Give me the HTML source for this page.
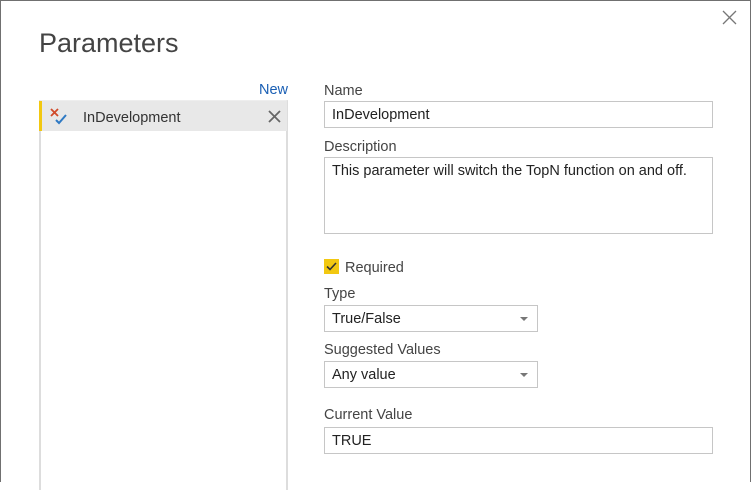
<!DOCTYPE html>
<html><head><style>
*{margin:0;padding:0;box-sizing:border-box}
body{width:751px;height:482px;background:#fff;font-family:"Liberation Sans",sans-serif;position:relative;overflow:hidden;color:#333}
.win{position:absolute;left:0;top:0;width:751px;height:482px;border:1px solid #707070;border-bottom:none}
.a{position:absolute}
.lbl{position:absolute;left:324px;font-size:14.5px;color:#444;margin-top:1px}
.inp{position:absolute;left:324px;border:1px solid #c6c6c6;background:#fff;font-size:14.5px;color:#222;padding:5px 7px 3px}
.dd{width:214px;height:27px}
.dd:after{content:"";position:absolute;right:9px;top:11px;border-left:4px solid transparent;border-right:4px solid transparent;border-top:4px solid #777}
</style></head><body>
<div class="win"></div>
<div class="a" style="left:39px;top:28px;font-size:27px;color:#444">Parameters</div>
<svg class="a" style="left:722px;top:10px" width="15" height="15"><path d="M1 1L14 14M14 1L1 14" stroke="#777" stroke-width="1.3"/></svg>
<div class="a" style="left:259px;top:82px;font-size:14.5px;color:#1a5fb4">New</div>
<div class="a" style="left:39px;top:100px;width:249px;height:390px;border-left:2px solid #ddd;border-right:2px solid #ddd;border-top:1px solid #eee"></div>
<div class="a" style="left:39px;top:101px;width:248px;height:30px;background:#e8e8e8;border-left:3px solid #f2c811"></div>
<svg class="a" style="left:49px;top:107px" width="20" height="20"><path d="M2 2L9 9M9 2L2 9" stroke="#d04a2a" stroke-width="1.8"/><path d="M7 13L10 16L17 8" stroke="#2f7ac4" stroke-width="2" fill="none"/></svg>
<div class="a" style="left:83px;top:110px;font-size:14.5px;color:#333">InDevelopment</div>
<svg class="a" style="left:268px;top:110px" width="13" height="13"><path d="M1 1L12 12M12 1L1 12" stroke="#666" stroke-width="1.8"/></svg>
<div class="lbl" style="top:82px">Name</div>
<div class="inp" style="top:101px;width:389px;height:27px">InDevelopment</div>
<div class="lbl" style="top:138px">Description</div>
<div class="inp" style="top:157px;width:389px;height:77px">This parameter will switch the TopN function on and off.</div>
<div class="a" style="left:324px;top:259px;width:15px;height:15px;background:#f2c811"></div>
<svg class="a" style="left:324px;top:259px" width="15" height="15"><path d="M3 7.5L6 10.5L12 4" stroke="#333" stroke-width="1.6" fill="none"/></svg>
<div class="lbl" style="left:345px;top:259px">Required</div>
<div class="lbl" style="top:285px">Type</div>
<div class="inp dd" style="top:305px">True/False</div>
<div class="lbl" style="top:341px">Suggested Values</div>
<div class="inp dd" style="top:361px">Any value</div>
<div class="lbl" style="top:406px">Current Value</div>
<div class="inp" style="top:427px;width:389px;height:27px">TRUE</div>
</body></html>
